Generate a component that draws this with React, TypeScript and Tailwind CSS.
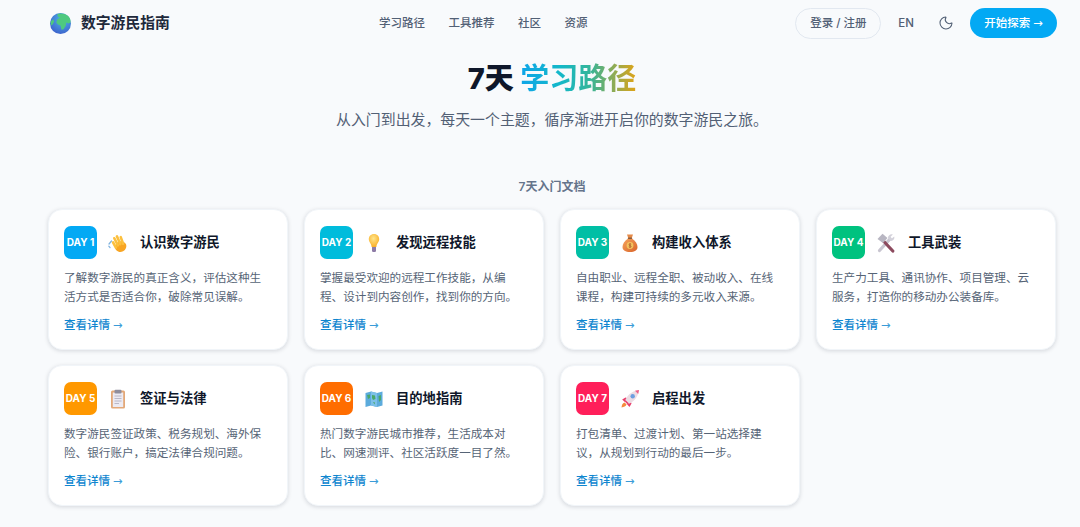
import React from "react";
import { Moon } from "lucide-react";

// emoji drawn by hand, the system emoji font has a different look
const Globe = () => (
  <svg viewBox="0 0 20 20" className="w-[21px] h-[21px]">
    <defs>
      <radialGradient id="sea" cx="0.6" cy="0.3" r="0.85">
        <stop offset="0" stopColor="#4fb5e8" />
        <stop offset="1" stopColor="#3a55c8" />
      </radialGradient>
    </defs>
    <circle cx="10" cy="10" r="10" fill="url(#sea)" />
    <path d="M7 1 C10 -0.2 15 0.3 18 3.5 C19.5 5.5 19.6 7 19.5 9 L17.5 10 L15.5 9 L15 12 L13 15.5 L11 16 L10 12 L7.5 11 L6 9 L7 6 L9.5 4.5 L7.5 3.5 Z" fill="#4ec97f" />
    <path d="M0.6 8 L3 6 L4 8 L2.5 11 L1 12 Z" fill="#4ec97f" />
  </svg>
);

const Hand = () => (
  <svg viewBox="0 0 20 20" className="w-[20px] h-[20px]">
    <path d="M1 11 L3.5 8 M2 14.5 L0.8 13.2" stroke="#7fb2de" strokeWidth="1.2" strokeLinecap="round" />
    <g transform="rotate(-28 12 13)">
      <ellipse cx="12.3" cy="13.8" rx="5.8" ry="5.2" fill="#f8a523" />
      <g stroke="#fcc03e" strokeWidth="2.6" strokeLinecap="round">
        <path d="M7.6 12.5 L7.6 6.5" />
        <path d="M10.4 11.5 L10.6 3.5" />
        <path d="M13.2 11.5 L13.8 3" />
        <path d="M15.8 12.5 L16.8 5.5" />
      </g>
    </g>
  </svg>
);

const Bulb = () => (
  <svg viewBox="0 0 20 20" className="w-[20px] h-[20px]">
    <defs>
      <radialGradient id="glow" cx="0.45" cy="0.35" r="0.7">
        <stop offset="0" stopColor="#ffe58a" />
        <stop offset="1" stopColor="#f9ab20" />
      </radialGradient>
    </defs>
    <rect x="8" y="13" width="4" height="6" rx="1.2" fill="#8d7ba6" />
    <path d="M10 1 C13.3 1 15.2 3.4 15.2 6.2 C15.2 9.2 12.6 10.4 12.4 14 L7.6 14 C7.4 10.4 4.8 9.2 4.8 6.2 C4.8 3.4 6.7 1 10 1 Z" fill="url(#glow)" />
  </svg>
);

const Bag = () => (
  <svg viewBox="0 0 20 20" className="w-[20px] h-[20px]">
    <defs>
      <linearGradient id="sack" x1="0" y1="0" x2="1" y2="1">
        <stop offset="0" stopColor="#f5a35c" />
        <stop offset="1" stopColor="#d9642a" />
      </linearGradient>
    </defs>
    <path d="M7 1.5 L13 1.5 L11.8 5 L8.2 5 Z" fill="#e58a48" />
    <path d="M8 5.5 C4.5 8 2.5 11 2.5 14 C2.5 17.5 5.5 19 10 19 C14.5 19 17.5 17.5 17.5 14 C17.5 11 15.5 8 12 5.5 Z" fill="url(#sack)" />
    <rect x="7.8" y="4.6" width="4.4" height="1.4" rx="0.7" fill="#8a5a3a" />
    <circle cx="10" cy="12.5" r="3.4" fill="#f3c25e" />
    <path d="M10 10 L10 15 M11.2 11.3 C10.4 10.7 8.9 11 8.9 11.8 C8.9 13 11.2 12.2 11.2 13.4 C11.2 14.2 9.6 14.4 8.8 13.7" stroke="#a8562a" strokeWidth="0.7" fill="none" />
  </svg>
);

const Tools = () => (
  <svg viewBox="0 0 20 20" className="w-[20px] h-[20px]">
    <path d="M3.5 17.5 L14 6" stroke="#c8c5d0" strokeWidth="3.2" strokeLinecap="round" />
    <path d="M12 5 C11.8 2.6 14.4 0.6 16.8 1.4 L14.6 3.8 L15.8 5.4 L18.2 3.6 C19 6.4 16.6 8.6 14.2 7.8 Z" fill="#d3d1da" />
    <path d="M16.8 18 L7 7.5" stroke="#8c4a5e" strokeWidth="3.2" strokeLinecap="round" />
    <path d="M1.5 6 L6.5 0.8 L11.5 5 L7 10 Z" fill="#b8b6c2" />
  </svg>
);

const Clipboard = () => (
  <svg viewBox="0 0 20 20" className="w-[20px] h-[20px]">
    <rect x="3" y="1.5" width="14" height="18" rx="1.5" fill="#e3a878" />
    <rect x="4.8" y="3.5" width="10.4" height="14.5" fill="#eceaf2" />
    <rect x="6.5" y="0.8" width="7" height="3.6" rx="1" fill="#8f8d9c" />
    <path d="M6.5 7 H13.5 M6.5 9.5 H13.5 M6.5 12 H13.5 M6.5 14.5 H11" stroke="#b4b2c2" strokeWidth="0.9" />
  </svg>
);

const MapIcon = () => (
  <svg viewBox="0 0 20 20" className="w-[20px] h-[20px]">
    <path d="M1.5 4 L7 2.5 L13 4 L18.5 2.5 L18.5 16.5 L13 18 L7 16.5 L1.5 18 Z" fill="#5cabdc" />
    <path d="M7 2.5 L13 4 L13 18 L7 16.5 Z" fill="#7cc0e8" />
    <path d="M3 6 L6 5.5 L6 9 L4 10 Z M8 6 L11 6.5 L11.5 10 L9 11 L8 9 Z M14.5 7 L17 6 L17 11 L15 13 Z M9 13 L11 13.5 L10.5 15.5 Z" fill="#4aa86a" />
  </svg>
);

const Rocket = () => (
  <svg viewBox="0 0 20 20" className="w-[20px] h-[20px]">
    <path d="M1.5 18.5 C1.7 16 2.6 14.4 4.5 13.6 L6.6 15.6 C5.7 17.4 4 18.3 1.5 18.5 Z" fill="#f58a3c" />
    <path d="M5.5 8.5 L2.2 10.5 L4.8 13 L8 9.5 Z" fill="#e83e6c" />
    <path d="M11.5 14.5 L9.5 18 L7 15.2 L10.5 12 Z" fill="#e83e6c" />
    <path d="M4.8 12.5 C6.5 7 11 2 19 1 C18 9 13 13.5 7.5 15.2 Z" fill="#ecdde4" />
    <path d="M15 1.8 L19 1 L18.2 5 Z" fill="#ef5f88" />
    <path d="M4.8 12.5 L7.5 15.2 L9 14.6 L5.4 11 Z" fill="#e83e6c" />
    <circle cx="12.7" cy="7.3" r="2.2" fill="#6c9fe0" />
  </svg>
);

const days = [
  { day: "DAY 1", color: "bg-[#03a9f4]", icon: <Hand />, title: "认识数字游民", text: "了解数字游民的真正含义，评估这种生活方式是否适合你，破除常见误解。" },
  { day: "DAY 2", color: "bg-[#00bcdc]", icon: <Bulb />, title: "发现远程技能", text: "掌握最受欢迎的远程工作技能，从编程、设计到内容创作，找到你的方向。" },
  { day: "DAY 3", color: "bg-[#00bfa5]", icon: <Bag />, title: "构建收入体系", text: "自由职业、远程全职、被动收入、在线课程，构建可持续的多元收入来源。" },
  { day: "DAY 4", color: "bg-[#00c27f]", icon: <Tools />, title: "工具武装", text: "生产力工具、通讯协作、项目管理、云服务，打造你的移动办公装备库。" },
  { day: "DAY 5", color: "bg-[#ff9800]", icon: <Clipboard />, title: "签证与法律", text: "数字游民签证政策、税务规划、海外保险、银行账户，搞定法律合规问题。" },
  { day: "DAY 6", color: "bg-[#ff6d00]", icon: <MapIcon />, title: "目的地指南", text: "热门数字游民城市推荐，生活成本对比、网速测评、社区活跃度一目了然。" },
  { day: "DAY 7", color: "bg-[#ff1f5a]", icon: <Rocket />, title: "启程出发", text: "打包清单、过渡计划、第一站选择建议，从规划到行动的最后一步。" },
];

export default function App() {
  return (
    <div className="min-h-[527px] bg-[#f8fafc] font-['Inter','Noto_Sans_CJK_SC',sans-serif] text-[#0f172a] overflow-hidden pl-[48px] pr-[24px]">
      <header className="h-[46px] flex items-center pl-[2px] -mr-px">
        <div className="flex items-center gap-[10px] w-[329px]">
          <Globe />
          <span className="text-[14.8px] font-semibold text-[#1e293b]">数字游民指南</span>
        </div>
        <nav className="flex items-center gap-[23.5px] pt-[2px] text-[11.5px] font-medium text-[#526075]">
          <a>学习路径</a>
          <a>工具推荐</a>
          <a>社区</a>
          <a>资源</a>
        </nav>
        <div className="flex items-center ml-auto">
          <button className="h-[31px] w-[86px] pt-[2px] rounded-full border border-[#e2e8f0] text-[11.5px] font-medium text-[#526075]">登录 / 注册</button>
          <span className="ml-[17px] pt-[2px] text-[11.5px] font-medium text-[#526075]">EN</span>
          <Moon className="ml-[24px] w-[16px] h-[16px] text-[#526075]" strokeWidth={1.6} />
          <button className="ml-[16px] h-[30px] w-[87px] pt-[2px] rounded-full bg-[#03a9f4] text-white text-[11.5px] font-medium">开始探索 <span className="font-['DejaVu_Sans'] font-normal">→</span></button>
        </div>
      </header>

      <section className="text-center">
        <h1 className="mt-[11px] text-[29px] leading-[44px] font-extrabold">
          7天 <span className="font-bold bg-[linear-gradient(90deg,#0ea5e9,#14b8c8_35%,#34b59a_60%,#e0a316)] bg-clip-text text-transparent">学习路径</span>
        </h1>
        <p className="mt-[7px] text-[14.9px] leading-[24px] text-[#526075]">从入门到出发，每天一个主题，循序渐进开启你的数字游民之旅。</p>
      </section>

      <h2 className="mt-[47px] text-center text-[12px] leading-[16px] font-semibold text-[#64748b]">7天入门文档</h2>

      <main className="mt-[14px] grid grid-cols-4 gap-x-[16px] gap-y-[15px]">
        {days.map((d) => (
          <div key={d.day} className="h-[141px] bg-white rounded-[14px] border border-[#f1f5f9] shadow-[0_1px_4px_rgba(15,23,42,0.15)] px-[15px] pt-[16px]">
            <div className="flex items-center h-[33px]">
              <div className={`w-[33px] h-[33px] rounded-[7px] flex items-center justify-center text-white text-[10px] font-bold ${d.color}`}>{d.day}</div>
              <span className="ml-[11px] w-[20px]">{d.icon}</span>
              <h3 className="ml-[12px] text-[13.3px] font-semibold text-[#0f172a]">{d.title}</h3>
            </div>
            <p className="mt-[10px] text-[11.6px] leading-[19px] text-[#566476]">{d.text}</p>
            <a className="block mt-[8px] text-[11.5px] leading-[20px] font-medium text-[#0f86cf]">查看详情 <span className="font-['DejaVu_Sans'] font-normal text-[#3a9bd8]">→</span></a>
          </div>
        ))}
      </main>
    </div>
  );
}
